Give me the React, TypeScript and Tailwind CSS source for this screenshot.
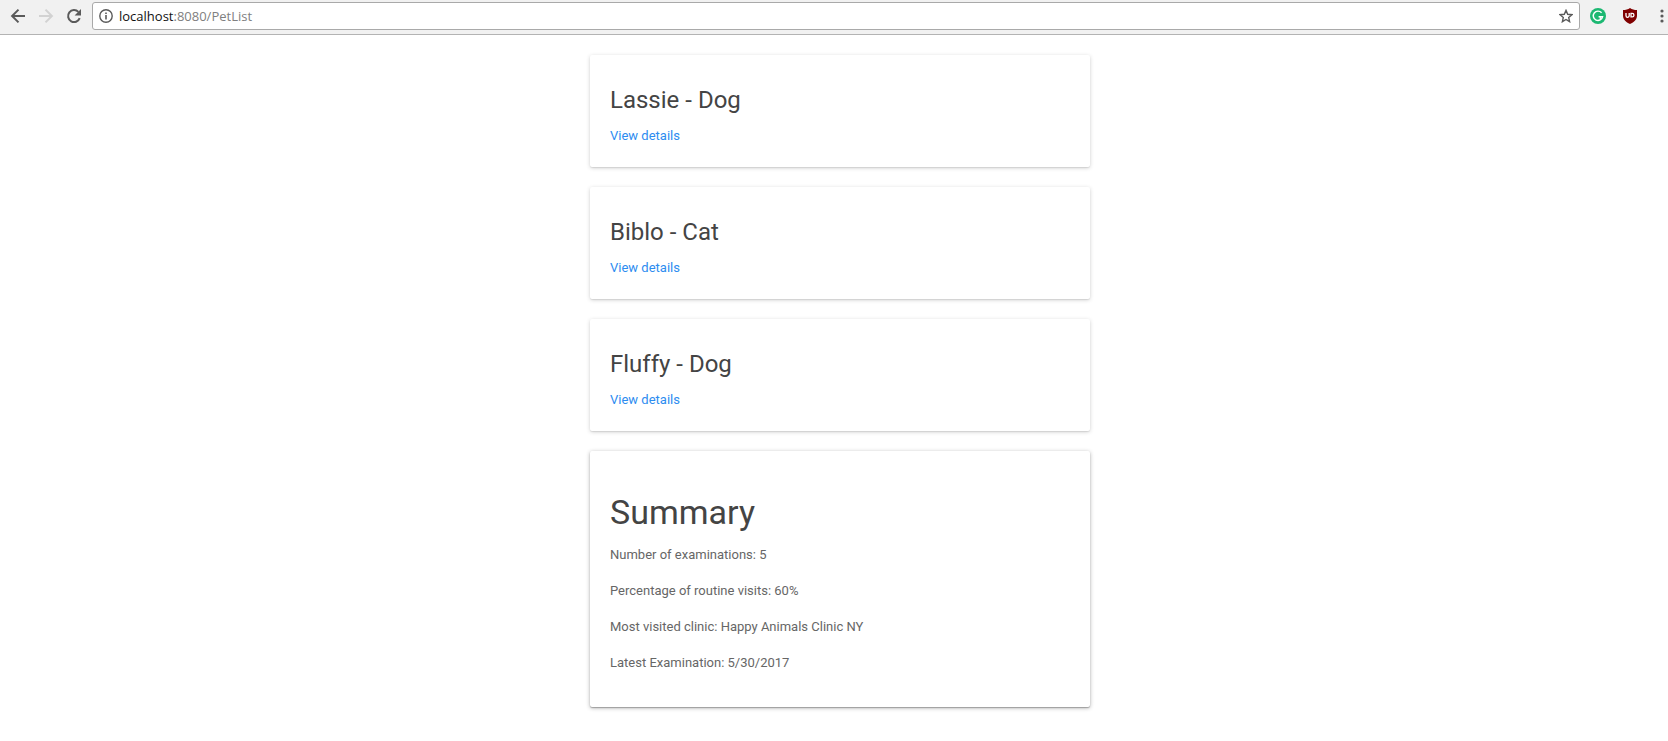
const pets = [
  { name: "Lassie", kind: "Dog" },
  { name: "Biblo", kind: "Cat" },
  { name: "Fluffy", kind: "Dog" },
];

const summary = [
  "Number of examinations: 5",
  "Percentage of routine visits: 60%",
  "Most visited clinic: Happy Animals Clinic NY",
  "Latest Examination: 5/30/2017",
];

function Toolbar() {
  return (
    <header className="flex h-[35px] items-center overflow-hidden border-b border-[#b3b3b3] bg-[#f1f1f1] pb-0.5 text-[#5a5a5a]">
      <nav className="flex shrink-0 items-center gap-3 pl-2.5" aria-label="History">
        <button type="button" aria-label="Back">
          <svg className="size-4" viewBox="0 0 16 16" fill="none" stroke="currentColor" strokeWidth="2">
            <path d="M15 8H2.5M8.5 1.6 2.1 8l6.4 6.4" />
          </svg>
        </button>
        <button type="button" aria-label="Forward" className="text-[#d2d2d2]">
          <svg className="size-4" viewBox="0 0 16 16" fill="none" stroke="currentColor" strokeWidth="2">
            <path d="M1 8h12.5M7.5 1.6 13.9 8l-6.4 6.4" />
          </svg>
        </button>
        <button type="button" aria-label="Reload">
          <svg className="size-4" viewBox="0 0 16 16" fill="none">
            <path d="M13.7 10.2A6 6 0 1 1 12.4 3.9" stroke="currentColor" strokeWidth="2" />
            <path d="M15 1v6.4H8.6z" fill="currentColor" />
          </svg>
        </button>
      </nav>
      <div className="ml-2.5 flex h-7 min-w-0 grow items-center rounded-[3px] border border-[#a9a9a9] bg-white pl-1.5 pr-1.5">
        <button type="button" aria-label="Site information">
          <svg className="size-3.5" viewBox="0 0 14 14" fill="none">
            <circle cx="7" cy="7" r="6.2" stroke="currentColor" strokeWidth="1.4" />
            <path d="M6.2 6h1.6v4.4H6.2zM6.2 3.4h1.6V5H6.2z" fill="currentColor" />
          </svg>
        </button>
        <p className="ml-1.5 min-w-0 grow truncate font-['Open_Sans','Noto_Sans',sans-serif] text-[13px] leading-5 text-[#808080]">
          <span className="text-[#111111]">localhost</span>:8080/PetList
        </p>
        <button type="button" aria-label="Bookmark this page">
          <svg className="size-3.5" viewBox="0 0 14 14" fill="none" stroke="currentColor" strokeWidth="1.4">
            <path d="m7 1.4 1.7 3.9 4.200.4-3.200 2.800.9 4.200L7 10.500l-3.600 2.200.9-4.200-3.200-2.800 4.200-.4z" />
          </svg>
        </button>
      </div>
      <div className="ml-2.5 flex shrink-0 items-center pr-0.5">
        <button type="button" aria-label="Grammar checker">
          <svg className="size-4" viewBox="0 0 16 16" fill="none">
            <circle cx="8" cy="8" r="8" fill="#1cb872" />
            <path d="M11.600 4.800A4.700 4.700 0 1 0 12.600 8.700H8.600" stroke="#fff" strokeWidth="1.400" />
            <path d="M10.300 8.700v2.800" stroke="#fff" strokeWidth="1.200" />
          </svg>
        </button>
        <button type="button" aria-label="Content blocker" className="ml-4">
          <svg className="size-4" viewBox="0 0 16 16" fill="none">
            <path d="M8 0c2 1.400 4.400 2 7 2v5.500c0 4-2.800 6.700-7 8.500-4.200-1.800-7-4.500-7-8.500V2c2.600 0 5-.6 7-2z" fill="#800000" />
            <path d="M4 5v2.700a1.600 1.600 0 0 0 3.200 0V5" stroke="#fff" strokeWidth="1.300" />
            <path d="M9 5.400v3.500h1.200a1.750 1.750 0 0 0 0-3.500z" stroke="#fff" strokeWidth="1.300" />
          </svg>
        </button>
        <button type="button" aria-label="Menu" className="ml-5">
          <svg className="h-4 w-2" viewBox="0 0 8 16" fill="currentColor">
            <circle cx="4" cy="3" r="1.600" />
            <circle cx="4" cy="8" r="1.600" />
            <circle cx="4" cy="13" r="1.600" />
          </svg>
        </button>
      </div>
    </header>
  );
}

export default function App() {
  return (
    <div className="min-h-screen bg-white font-[Roboto,sans-serif]">
      <Toolbar />
      <main className="flex flex-col items-center gap-5 py-5 pl-3">
        {pets.map((pet) => (
          <article
            key={pet.name}
            className="w-full max-w-[500px] rounded-[2px] px-5 pt-7 pb-5 shadow-[0_1px_4px_rgba(0,0,0,0.18),0_1px_1px_rgba(0,0,0,0.08)]"
          >
            <h2 className="text-2xl leading-[34px] text-[#444444]">
              {pet.name} - {pet.kind}
            </h2>
            <p className="mt-2 text-[13px] leading-[22px]">
              <a href="#details" className="text-[#2d8cf0]">
                View details
              </a>
            </p>
          </article>
        ))}
        <section className="w-full max-w-[500px] rounded-[2px] px-5 pt-10 pb-[34px] shadow-[0_1px_4px_rgba(0,0,0,0.3),0_1px_1px_rgba(0,0,0,0.24)]">
          <h1 className="text-[34px] leading-[42px] text-[#444444]">Summary</h1>
          <div className="mt-3 flex flex-col gap-4 text-[13px] leading-5 text-[#666666]">
            {summary.map((line) => (
              <p key={line}>{line}</p>
            ))}
          </div>
        </section>
      </main>
    </div>
  );
}
